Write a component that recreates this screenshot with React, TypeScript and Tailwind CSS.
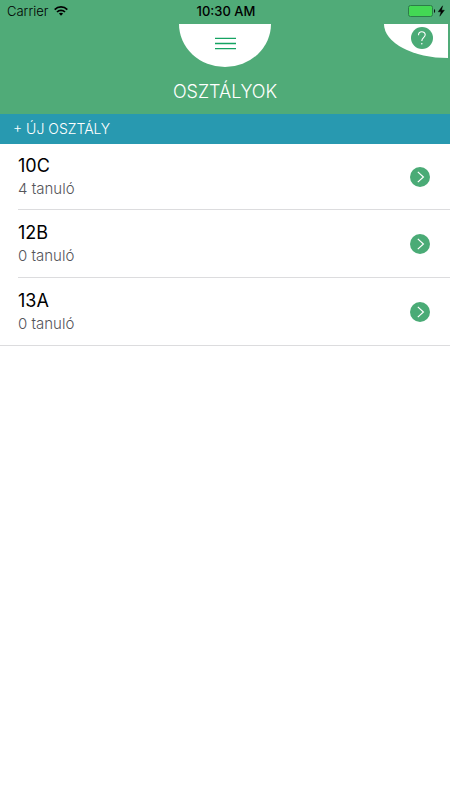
import React, { FC } from 'react';

interface IClassRoom {
  id: number;
  name: string;
  studentCount: number;
}

const classRooms: IClassRoom[] = [
  { id: 1, name: '10C', studentCount: 4 },
  { id: 2, name: '12B', studentCount: 0 },
  { id: 3, name: '13A', studentCount: 0 },
];

const StatusBar: FC = () => (
  <div className="grid grid-cols-3 items-center h-6 pb-[2px] pl-[7px] pr-[5px] text-[13px] leading-4 text-black">
    <div className="flex items-center gap-[6px]">
      <span className="font-light">Carrier</span>
      <svg width="14" height="10" viewBox="0 0 14 10" fill="none" stroke="currentColor" strokeWidth="1.7">
        <path d="M0.7 3.6C4.2 0 9.8 0 13.3 3.6" />
        <path d="M3 6C5.2 3.7 8.8 3.7 11 6" />
        <path d="M7 9.8L4.9 7.6C6 6.5 8 6.5 9.1 7.6Z" fill="currentColor" stroke="none" />
      </svg>
    </div>
    <span className="text-center font-medium">10:30 AM</span>
    <div className="flex items-center justify-end">
      <svg width="37" height="12" viewBox="0 0 37 12">
        <rect x="0.5" y="0.5" width="24" height="11" rx="2" fill="#43d854" stroke="#2c7d49" />
        <path d="M26 4C27.6 4.5 27.6 7.5 26 8Z" fill="#111" />
        <path d="M34.6 0.8L30.2 6.8H33L31.8 11.2L36.4 5.2H33.6Z" fill="#000" stroke="#000" strokeWidth="0.4" />
      </svg>
    </div>
  </div>
);

const Header: FC = () => (
  <header className="bg-[#50ab78]">
    <StatusBar />
    <div className="relative flex justify-center">
      <button
        aria-label="Menü"
        className="flex justify-center items-start w-[92px] h-[43px] pt-[13px] bg-white [border-radius:0_0_50%_50%/0_0_100%_100%]"
      >
        <svg width="21" height="13" viewBox="0 0 21 13" stroke="#15a362" strokeWidth="1.3">
          <path d="M0 1.3H21M0 6.5H21M0 11.7H21" />
        </svg>
      </button>
      <button
        aria-label="Súgó"
        className="absolute top-0 right-[2px] flex justify-end items-start w-16 h-[34px] pt-[3px] pr-[15px] bg-white rounded-bl-[100%]"
      >
        <svg width="22" height="22" viewBox="0 0 22 22" fill="none">
          <circle cx="11" cy="11" r="11" fill="#4aab76" />
          <path d="M7.5 8.2C7.5 3.5 14.2 3.8 14.2 7.8C14.2 10.6 10.8 10.8 10.8 14" stroke="#fff" strokeWidth="1.1" />
          <circle cx="10.8" cy="16.8" r="0.8" fill="#fff" />
        </svg>
      </button>
    </div>
    <h1 className="pt-[13px] pb-[10px] text-center text-lg leading-6 font-light text-white">OSZTÁLYOK</h1>
  </header>
);

const ClassRoomList: FC = () => (
  <ul className="border-b border-[#dcdcde]">
    {classRooms.map((classRoom) => (
      <li key={classRoom.id} className="group pl-[18px]">
        <a
          href={'#class-' + classRoom.id}
          className="flex items-center justify-between h-[68px] pr-5 border-b border-[#dcdcde] group-first:h-[66px] group-last:h-[67px] group-last:border-b-0"
        >
          <div className="flex flex-col">
            <span className="text-lg leading-6 text-black">{classRoom.name}</span>
            <span className="text-[15px] leading-[22px] font-light text-[#55555a]">{classRoom.studentCount} tanuló</span>
          </div>
          <svg width="20" height="20" viewBox="0 0 20 20" fill="none">
            <circle cx="10" cy="10" r="10" fill="#4aab76" />
            <path d="M7.8 4.9L13.4 10L7.8 15.1" stroke="#fff" strokeWidth="1.2" />
          </svg>
        </a>
      </li>
    ))}
  </ul>
);

const App: FC = () => {
  return (
    <div className="min-h-screen bg-white font-['Inter',sans-serif]">
      <Header />
      <button className="block w-full h-[30px] px-[13px] bg-[#2899b0] text-left text-sm font-light text-white">
        + ÚJ OSZTÁLY
      </button>
      <ClassRoomList />
    </div>
  );
};

export default App;
